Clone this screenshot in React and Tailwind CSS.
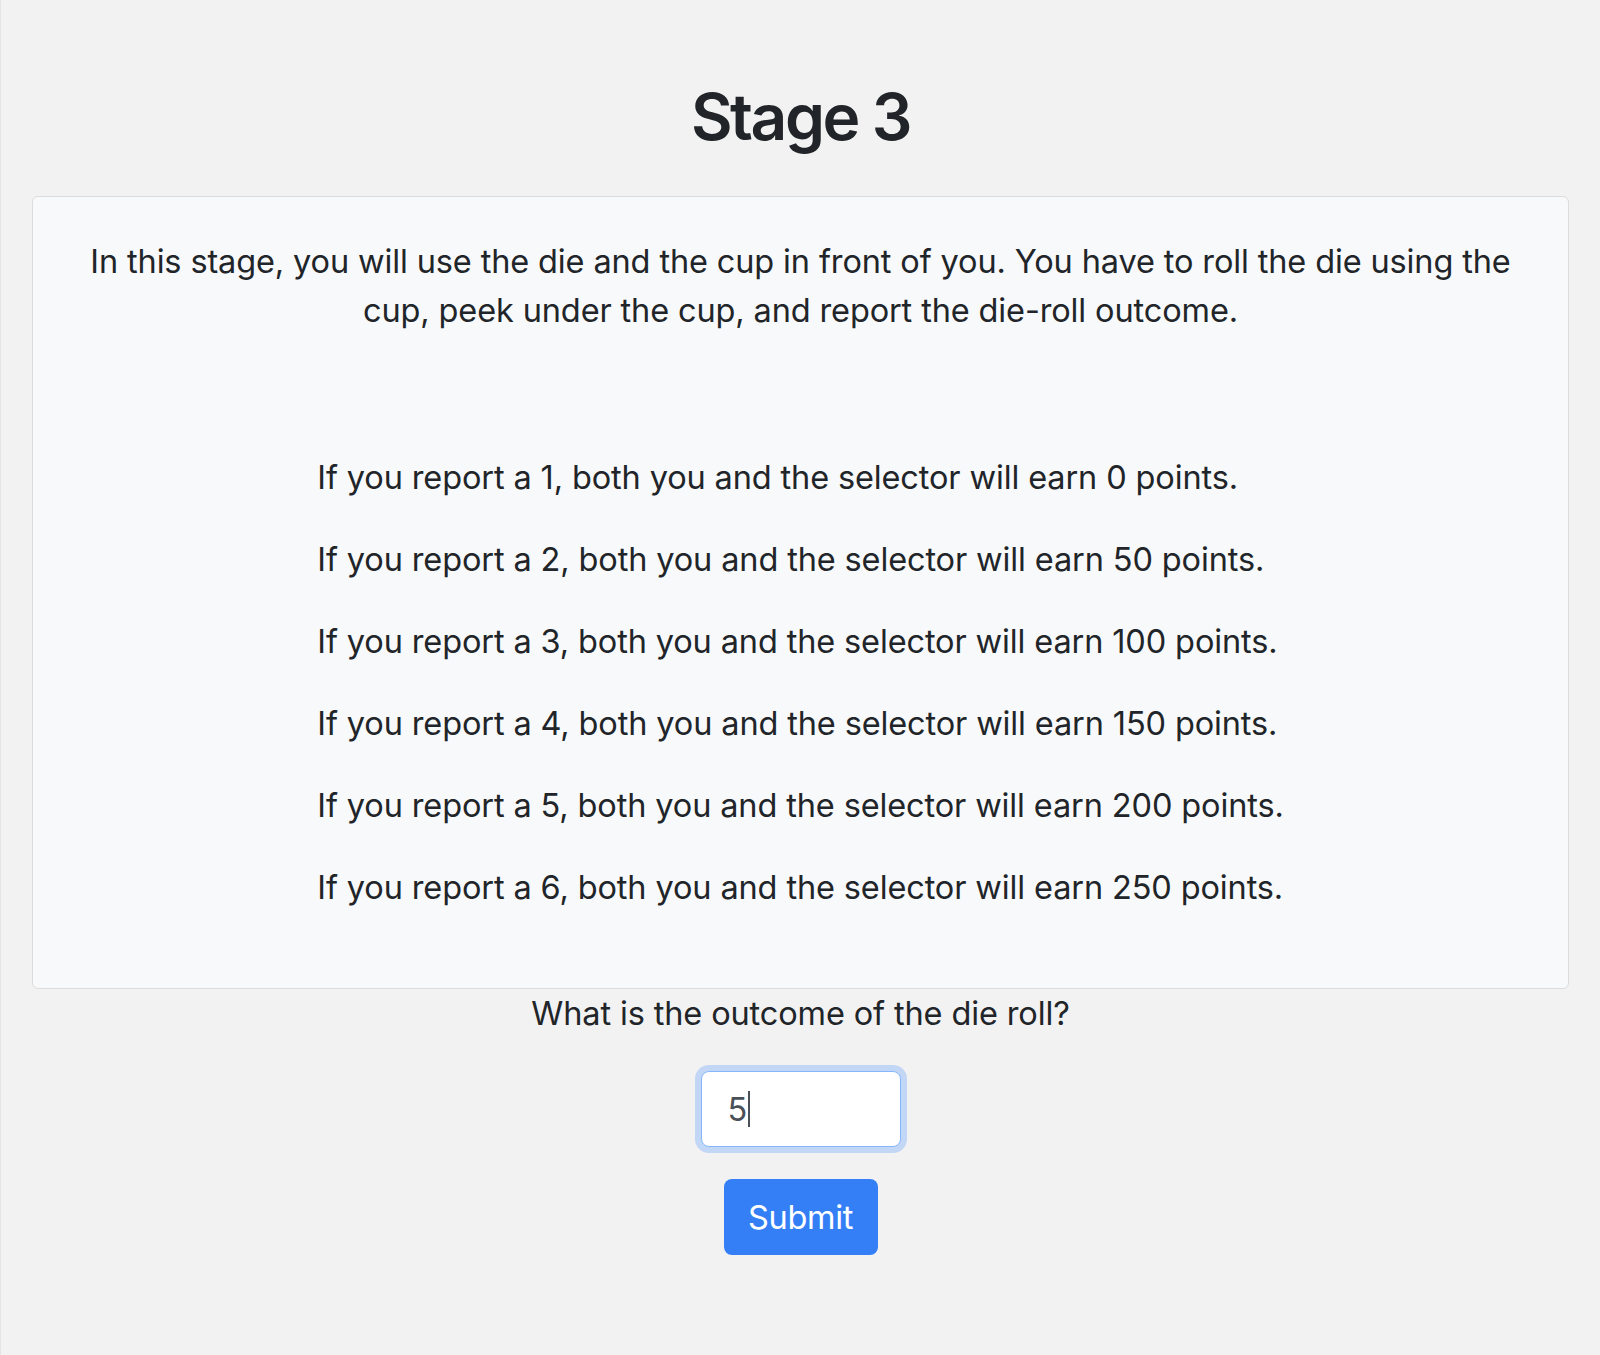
import React, { useState } from "react";

const payouts = [
  { n: 1, pts: 0 },
  { n: 2, pts: 50 },
  { n: 3, pts: 100 },
  { n: 4, pts: 150 },
  { n: 5, pts: 200 },
  { n: 6, pts: 250 },
];

const App = () => {
  const [outcome, setOutcome] = useState("5");

  return (
    <div
      className="min-h-screen bg-[#f2f2f2] border-l border-[#e4e4e4] pl-[31px] pr-[31px] pb-[40px] text-[#212529]"
      style={{ fontFamily: "Inter, 'Noto Sans', sans-serif" }}
    >
      <h1 className="pt-[78px] mb-[40px] text-center text-[64px] leading-[78px] font-semibold tracking-[-2.4px]">
        Stage 3
      </h1>

      {/* Instructions card */}
      <div className="bg-[#f8f9fa] border border-[#dcdcdc] rounded-[6px] px-[40px] pt-[40px] pb-[43px] text-center text-[32.5px] leading-[49px] tracking-[-0.13px]">
        <p className="mb-[118px]">
          In this stage, you will use the die and the cup in front of you. You
          have to roll the die using the cup, peek under the cup, and report the
          die-roll outcome.
        </p>
        <div className="inline-block text-left">
          {payouts.map((p) => (
            <p key={p.n} className="mb-[33px]">
              If you report a {p.n}, both you and the selector will earn{" "}
              {p.pts} points.
            </p>
          ))}
        </div>
      </div>

      {/* Answer */}
      <div className="flex flex-col items-center text-[32.5px] leading-[49px] tracking-[-0.13px]">
        <p>What is the outcome of the die roll?</p>
        <div className="relative mt-[33px]">
          <input
            type="text"
            value={outcome}
            onChange={(e) => setOutcome(e.target.value)}
            className="w-[200px] h-[76px] px-[26px] bg-white border border-[#86b7fe] rounded-[8px] text-[32.5px] text-[#495057] outline-none ring-[6px] ring-[#c2d6f5] caret-transparent"
            style={{ fontFamily: "Inter, 'Noto Sans', sans-serif" }}
          />
          {/* caret */}
          <span className="absolute left-[47px] top-[20px] w-[2px] h-[36px] bg-[#495057]" />
        </div>
        <button
          type="button"
          className="mt-[32px] w-[154px] h-[76px] bg-[#347ff6] text-white rounded-[8px] text-[32.5px] tracking-[-0.3px]"
          style={{ fontFamily: "Inter, 'Noto Sans', sans-serif" }}
        >
          Submit
        </button>
      </div>
    </div>
  );
};

export default App;
